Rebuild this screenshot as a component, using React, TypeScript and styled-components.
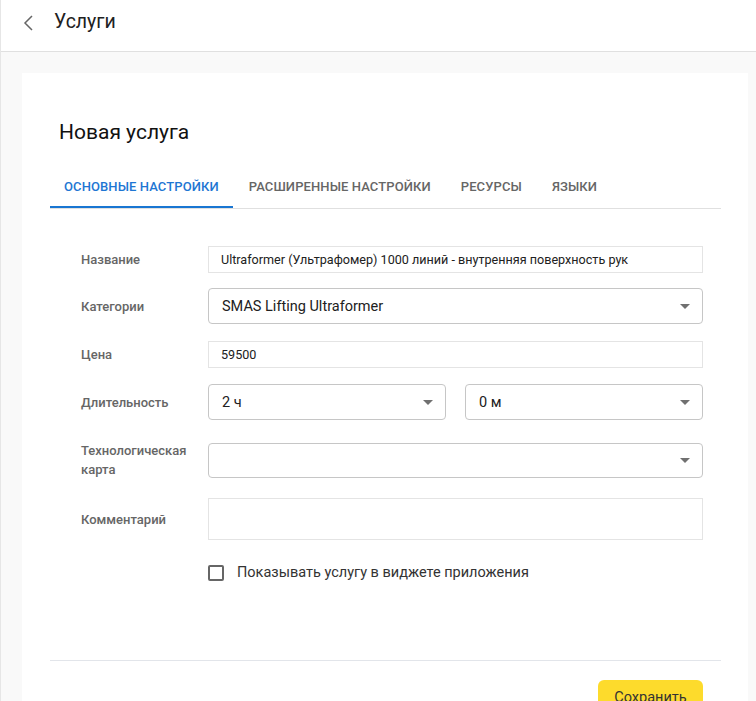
import React, { Component } from 'react';
import styled, { createGlobalStyle } from 'styled-components';

const GlobalStyle = createGlobalStyle`
    body {
        margin: 0;
        font-family: Roboto, "Noto Sans", Arial, sans-serif;
        background: #f9f9f9;
        color: #212121;
    }
`
const Page = styled.div`
    min-height: 100vh;
    border-left: 1px solid #e6e6e6;
`
const Header = styled.div`
    height: 52px;
    box-sizing: border-box;
    display: flex;
    align-items: flex-start;
    padding: 10px 0 0 22px;
    background: #ffffff;
    border-bottom: 1px solid #e0e0e0;
`
const BackButton = styled.button`
    border: none;
    background: none;
    padding: 0;
    margin: 5px 21px 0 0;
    width: 10px;
    height: 16px;
    display: flex;
    cursor: pointer;
`
const HeaderTitle = styled.div`
    font-size: 19.5px;
    line-height: 24px;
    color: #212121;
`
const Main = styled.div`
    padding: 21px 8px 0 21px;
`
const Card = styled.div`
    background: #ffffff;
    padding: 47px 27px 0 28px;
`
const Title = styled.h1`
    margin: 0 0 33px 9px;
    font-size: 21px;
    line-height: 24px;
    font-weight: 400;
    color: #111111;
`
const TabBar = styled.div`
    display: flex;
    gap: 2px;
    border-bottom: 1px solid #e0e0e0;
`
const Tab = styled.div<{ $active?: boolean }>`
    padding: 0 14px 9px;
    font-size: 13px;
    line-height: 20px;
    font-weight: 500;
    letter-spacing: 0.1px;
    text-transform: uppercase;
    color: ${p => p.$active ? '#1e76d3' : '#666666'};
    border-bottom: 2px solid ${p => p.$active ? '#1976d2' : 'transparent'};
    cursor: pointer;
`
const Form = styled.div`
    display: flex;
    flex-direction: column;
    padding: 37px 18px 0 31px;
`
const Row = styled.div<{ $mt: number }>`
    display: flex;
    align-items: center;
    margin-top: ${p => p.$mt}px;
`
const Label = styled.div`
    width: 127px;
    flex-shrink: 0;
    padding-right: 14px;
    box-sizing: border-box;
    font-size: 13px;
    line-height: 19px;
    font-weight: 500;
    color: #666666;
`
const Field = styled.div`
    flex: 1;
    display: flex;
    gap: 19px;
`
const TextInput = styled.input<{ $h?: number }>`
    flex: 1;
    height: ${p => p.$h || 27}px;
    box-sizing: border-box;
    border: 1px solid #e4e4e4;
    border-radius: 0;
    padding: 0 12px;
    font-family: Roboto, "Noto Sans", Arial, sans-serif;
    font-size: 12.6px;
    color: #212121;
    outline: none;
`
const Select = styled.div<{ $h?: number }>`
    flex: 1;
    height: ${p => p.$h || 36}px;
    box-sizing: border-box;
    border: 1px solid #c6c6c6;
    border-radius: 4px;
    padding: 0 12px 0 13px;
    display: flex;
    align-items: center;
    justify-content: space-between;
    font-size: 14.5px;
    color: #212121;
    cursor: pointer;
`
const Arrow = styled.span`
    width: 0;
    height: 0;
    border-left: 5px solid transparent;
    border-right: 5px solid transparent;
    border-top: 5px solid #707070;
`
const CheckRow = styled.label`
    display: flex;
    align-items: center;
    gap: 13px;
    margin-top: 24px;
    padding-left: 127px;
    font-size: 14.5px;
    line-height: 18px;
    color: #333333;
    cursor: pointer;
`
const CheckBox = styled.span`
    width: 16px;
    height: 16px;
    box-sizing: border-box;
    border: 2px solid #666666;
    border-radius: 2px;
`
const Divider = styled.div`
    margin-top: 78px;
    height: 1px;
    background: #e2e5ea;
`
const Footer = styled.div`
    display: flex;
    justify-content: flex-end;
    padding: 19px 18px 12px 0;
`
const SaveButton = styled.button`
    width: 105px;
    height: 34px;
    border: none;
    border-radius: 6px;
    background: #fddb2c;
    font-family: Roboto, "Noto Sans", Arial, sans-serif;
    font-size: 14.5px;
    color: #333333;
    cursor: pointer;
`

type State = {
    name: string;
    price: string;
    comment: string;
}

const tabs = ['Основные настройки', 'Расширенные настройки', 'Ресурсы', 'Языки'];

class App extends Component<{}, State> {

    constructor(props: any) {
        super(props);
        this.state = {
            name: 'Ultraformer (Ультрафомер) 1000 линий - внутренняя поверхность рук',
            price: '59500',
            comment: ''
        }
    }

    render() {
        return (
            <Page>
                <GlobalStyle />
                <Header>
                    <BackButton>
                        <svg width="10" height="16" viewBox="0 0 10 16">
                            <path d="M9 1 L2 8 L9 15" fill="none" stroke="#666" strokeWidth="1.5" />
                        </svg>
                    </BackButton>
                    <HeaderTitle>{'Услуги'}</HeaderTitle>
                </Header>
                <Main>
                    <Card>
                        <Title>{'Новая услуга'}</Title>
                        <TabBar>
                            {tabs.map((t, i) => <Tab key={t} $active={i === 0}>{t}</Tab>)}
                        </TabBar>
                        <Form>
                            <Row $mt={0}>
                                <Label>{'Название'}</Label>
                                <Field>
                                    <TextInput value={this.state.name} onChange={e => this.setState({ name: e.target.value })} />
                                </Field>
                            </Row>
                            <Row $mt={15}>
                                <Label>{'Категории'}</Label>
                                <Field>
                                    <Select>{'SMAS Lifting Ultraformer'}<Arrow /></Select>
                                </Field>
                            </Row>
                            <Row $mt={17}>
                                <Label>{'Цена'}</Label>
                                <Field>
                                    <TextInput value={this.state.price} onChange={e => this.setState({ price: e.target.value })} />
                                </Field>
                            </Row>
                            <Row $mt={16}>
                                <Label>{'Длительность'}</Label>
                                <Field>
                                    <Select>{'2 ч'}<Arrow /></Select>
                                    <Select>{'0 м'}<Arrow /></Select>
                                </Field>
                            </Row>
                            <Row $mt={21}>
                                <Label>{'Технологическая карта'}</Label>
                                <Field>
                                    <Select $h={35}><span /><Arrow /></Select>
                                </Field>
                            </Row>
                            <Row $mt={19}>
                                <Label>{'Комментарий'}</Label>
                                <Field>
                                    <TextInput $h={42} value={this.state.comment} onChange={e => this.setState({ comment: e.target.value })} />
                                </Field>
                            </Row>
                            <CheckRow>
                                <CheckBox />
                                {'Показывать услугу в виджете приложения'}
                            </CheckRow>
                        </Form>
                        <Divider />
                        <Footer>
                            <SaveButton>{'Сохранить'}</SaveButton>
                        </Footer>
                    </Card>
                </Main>
            </Page>
        );
    }
}

export default App;
